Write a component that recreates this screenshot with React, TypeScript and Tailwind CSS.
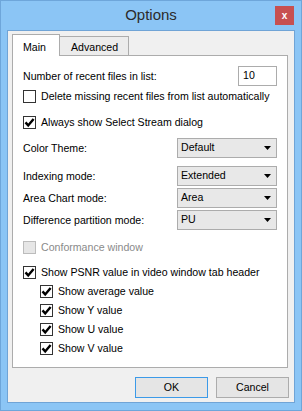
import type { ReactNode } from "react";

const font = { fontFamily: '"Liberation Sans", Arial, sans-serif' };

const Check = ({ checked, disabled }: { checked?: boolean; disabled?: boolean }) => (
  <span
    className={[
      "flex h-[13px] w-[13px] shrink-0 items-center justify-center border",
      disabled ? "border-[#bcbcbc] bg-[#e6e6e6]" : "border-[#333333] bg-white",
    ].join(" ")}
  >
    {checked && (
      <svg width="11" height="11" viewBox="0 0 11 11">
        <path d="M1.5 5.4 L4.2 8.4 L9.6 1.9" fill="none" stroke="#000" strokeWidth="2.4" />
      </svg>
    )}
  </span>
);

const CheckRow = ({
  label,
  checked,
  disabled,
  indent,
  className,
}: {
  label: string;
  checked?: boolean;
  disabled?: boolean;
  indent?: boolean;
  className: string;
}) => (
  <div className={["flex h-[13px] items-center gap-[5px]", indent ? "pl-[17px]" : "", className].join(" ")}>
    <Check checked={checked} disabled={disabled} />
    <span className={disabled ? "text-[#8a8a8a]" : "text-black"}>{label}</span>
  </div>
);

const Combo = ({ value }: { value: string }) => (
  <div className="flex h-[20px] w-[100px] items-center justify-between border border-[#acacac] bg-[#e8e8e8] pl-[3px] pr-[5px]">
    <span>{value}</span>
    <svg width="7" height="4" viewBox="0 0 7 4">
      <path d="M0 0 H7 L3.5 4 Z" fill="#000" />
    </svg>
  </div>
);

const ComboRow = ({ label, value, className }: { label: string; value: string; className: string }) => (
  <div className={["flex h-[20px] items-center justify-between", className].join(" ")}>
    <span className="pt-[2px]">{label}</span>
    <Combo value={value} />
  </div>
);

const Button = ({ children, primary }: { children: ReactNode; primary?: boolean }) => (
  <button
    className={[
      "flex h-[21px] w-[73px] items-center justify-center border bg-[#e5e5e5] text-black",
      primary ? "border-[#3c9ae8]" : "border-[#acacac]",
    ].join(" ")}
  >
    {children}
  </button>
);

export default function App() {
  return (
    <div
      className="flex h-[411px] w-[302px] flex-col border border-[#6ea6da] bg-[#8bc5f5] text-[10.6px] text-black"
      style={font}
    >
      <header className="relative flex h-[29px] shrink-0 items-center justify-center">
        <span className="text-[15px] text-[#2b2b2b]">Options</span>
        <span className="absolute right-[7px] top-[5px] flex h-[19px] w-[19px] items-center justify-center bg-[#c75050] text-[10px] font-bold text-white">
          x
        </span>
      </header>

      <div className="ml-[6px] flex h-[373px] w-[288px] flex-col border border-[#70a4d6] bg-[#f0f0f0] px-[4px]">
        <nav className="mt-[3px] flex h-[21px] items-end">
          <div className="relative z-10 flex h-[22px] w-[48px] translate-y-[1px] items-start border border-b-0 border-[#acacac] bg-white pl-[10px] pt-[5px]">
            Main
          </div>
          <div className="ml-[-1px] flex h-[19px] w-[70px] items-start border border-b-0 border-[#acacac] bg-[#ececec] pl-[11px] pt-[3px]">
            Advanced
          </div>
        </nav>

        <section className="flex h-[313px] w-[276px] flex-col border border-[#acacac] bg-white px-[10px]">
          <div className="mt-[10px] flex h-[20px] items-center justify-between">
            <span className="pt-[1px]">Number of recent files in list:</span>
            <div className="flex h-[20px] w-[39px] items-center border border-[#acacac] bg-white pl-[4px]">10</div>
          </div>
          <CheckRow className="mt-[4px]" label="Delete missing recent files from list automatically" />
          <CheckRow className="mt-[13px]" label="Always show Select Stream dialog" checked />
          <ComboRow className="mt-[9px]" label="Color Theme:" value="Default" />
          <ComboRow className="mt-[8px]" label="Indexing mode:" value="Extended" />
          <ComboRow className="mt-[2px]" label="Area Chart mode:" value="Area" />
          <ComboRow className="mt-[2px]" label="Difference partition mode:" value="PU" />
          <CheckRow className="mt-[11px]" label="Conformance window" disabled />
          <CheckRow className="mt-[12px]" label="Show PSNR value in video window tab header" checked />
          <CheckRow className="mt-[6px]" label="Show average value" checked indent />
          <CheckRow className="mt-[6px]" label="Show Y value" checked indent />
          <CheckRow className="mt-[6px]" label="Show U value" checked indent />
          <CheckRow className="mt-[6px]" label="Show V value" checked indent />
        </section>

        <div className="mt-[9px] flex justify-end gap-[8px] pr-[1px]">
          <Button primary>OK</Button>
          <Button>Cancel</Button>
        </div>
      </div>
    </div>
  );
}
